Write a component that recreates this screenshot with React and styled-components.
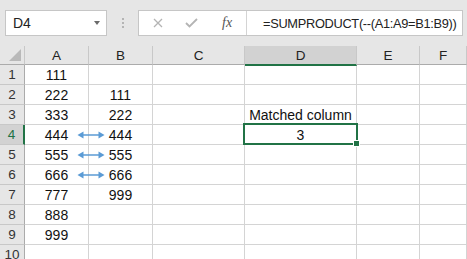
import React from 'react'
import styled, { createGlobalStyle } from 'styled-components'

const GlobalStyle = createGlobalStyle`
  html, body { margin: 0; padding: 0; background: #fff; }
  body { font-family: "Liberation Sans", Arial, sans-serif; }
`

const colA = [111, 222, 333, 444, 555, 666, 777, 888, 999]
const colB = ['', 111, 222, 444, 555, 666, 999, '', '']
const columns = ['A', 'B', 'C', 'D', 'E', 'F']
const arrowRows = [4, 5, 6]

const Page = styled.div`
  width: 467px;
  height: 259px;
  overflow: hidden;
  background: #fff;
`

const Toolbar = styled.div`
  height: 46px;
  box-sizing: border-box;
  padding: 10px 4px 0 5px;
  background: #e6e6e6;
  display: flex;
  align-items: flex-start;
`

const NameBox = styled.div`
  flex-shrink: 0;
  width: 102px;
  height: 26px;
  box-sizing: border-box;
  background: #fff;
  border: 1px solid #c6c6c6;
  display: flex;
  align-items: center;
  justify-content: space-between;
  padding: 0 6px 0 7px;
  font-size: 14px;
  color: #222;
`

const Caret = styled.span`
  width: 0;
  height: 0;
  border-left: 3.5px solid transparent;
  border-right: 3.5px solid transparent;
  border-top: 4px solid #6a6a6a;
`

const Grip = styled.div`
  flex-shrink: 0;
  width: 31px;
  height: 26px;
  display: flex;
  flex-direction: column;
  align-items: center;
  justify-content: center;
  gap: 2px;
  span {
    width: 2px;
    height: 2px;
    background: #b4b4b4;
  }
`

const FormulaBox = styled.div`
  flex: 1;
  min-width: 0;
  height: 26px;
  box-sizing: border-box;
  background: #fff;
  border: 1px solid #c6c6c6;
  display: flex;
  align-items: stretch;
  overflow: hidden;
`

const FxArea = styled.div`
  flex-shrink: 0;
  width: 108px;
  box-sizing: border-box;
  border-right: 1px solid #d4d4d4;
  display: flex;
  align-items: center;
  padding-left: 14px;
  gap: 22px;
`

const FxLabel = styled.span`
  font-family: "Liberation Serif", "Times New Roman", serif;
  font-style: italic;
  font-size: 14px;
  color: #555;
  margin-left: 2px;
`

const FormulaText = styled.div`
  display: flex;
  align-items: center;
  padding-left: 16px;
  font-size: 12.8px;
  letter-spacing: -0.3px;
  color: #222;
  white-space: nowrap;
`

const Grid = styled.div`
  display: grid;
  grid-template-columns: 25px 64px 64px 92px 112px 63px 1fr;
  grid-template-rows: 19px;
  grid-auto-rows: 20px;
`

const Corner = styled.div`
  background: #e6e6e6;
  border-right: 1px solid #c8c8c8;
  border-bottom: 1px solid #ababab;
  box-sizing: border-box;
  position: relative;
  &::after {
    content: '';
    position: absolute;
    right: 3px;
    bottom: 3px;
    border-left: 12px solid transparent;
    border-bottom: 12px solid #b9b9b9;
  }
`

const ColHead = styled.div`
  background: ${p => (p.$active ? '#d2d2d2' : '#e6e6e6')};
  border-right: 1px solid #c8c8c8;
  border-bottom: ${p => (p.$active ? '2px solid #217346' : '1px solid #ababab')};
  box-sizing: border-box;
  display: flex;
  align-items: center;
  justify-content: center;
  font-size: 13.5px;
  color: #222;
  margin-bottom: ${p => (p.$active ? '-1px' : '0')};
  position: relative;
  z-index: ${p => (p.$active ? 1 : 0)};
`

const RowHead = styled.div`
  background: ${p => (p.$active ? '#d2d2d2' : '#e6e6e6')};
  border-right: ${p => (p.$active ? '2px solid #217346' : '1px solid #ababab')};
  border-bottom: 1px solid #c8c8c8;
  box-sizing: border-box;
  display: flex;
  align-items: center;
  justify-content: center;
  font-size: 13.5px;
  color: ${p => (p.$active ? '#217346' : '#333')};
`

const Cell = styled.div`
  border-right: 1px solid #d4d4d4;
  border-bottom: 1px solid #d4d4d4;
  box-sizing: border-box;
  display: flex;
  align-items: center;
  justify-content: center;
  font-size: 14px;
  color: #111;
  position: relative;
  white-space: nowrap;
  overflow: visible;
`

const Selection = styled.div`
  position: absolute;
  left: -2px;
  top: -2px;
  right: -2px;
  bottom: -1px;
  border: 2px solid #217346;
  pointer-events: none;
  z-index: 3;
  &::after {
    content: '';
    position: absolute;
    right: -4px;
    bottom: -4px;
    width: 5px;
    height: 5px;
    background: #217346;
    border: 1px solid #fff;
  }
`

const Arrow = styled.svg`
  position: absolute;
  left: 52px;
  top: 5px;
  z-index: 2;
`

const DoubleArrow = () => (
  <Arrow width="28" height="10" viewBox="0 0 28 10">
    <line x1="3" y1="5" x2="25" y2="5" stroke="#5b9bd5" strokeWidth="1.5" />
    <path d="M0.5 5 L6.5 1.5 L6.5 8.5 Z" fill="#5b9bd5" />
    <path d="M27.5 5 L21.5 1.5 L21.5 8.5 Z" fill="#5b9bd5" />
  </Arrow>
)

const Cross = () => (
  <svg width="10" height="10" viewBox="0 0 10 10">
    <path d="M1 1 L9 9 M9 1 L1 9" stroke="#b4b4b4" strokeWidth="1.3" />
  </svg>
)

const Check = () => (
  <svg width="13" height="10" viewBox="0 0 13 10">
    <path d="M1 5 L4.5 8.5 L12 1" stroke="#b4b4b4" strokeWidth="1.8" fill="none" />
  </svg>
)

const App = () => {
  const rows = []
  for (let r = 1; r <= 10; r++) {
    const active = r === 4
    rows.push(
      <React.Fragment key={r}>
        <RowHead $active={active}>{r}</RowHead>
        <Cell>
          {colA[r - 1]}
          {arrowRows.includes(r) && <DoubleArrow />}
        </Cell>
        <Cell>{colB[r - 1]}</Cell>
        <Cell />
        <Cell>
          {r === 3 && 'Matched column'}
          {r === 4 && '3'}
          {r === 4 && <Selection />}
        </Cell>
        <Cell />
        <Cell />
      </React.Fragment>
    )
  }

  return (
    <Page>
      <GlobalStyle />
      <Toolbar>
        <NameBox>
          D4
          <Caret />
        </NameBox>
        <Grip>
          <span />
          <span />
          <span />
        </Grip>
        <FormulaBox>
          <FxArea>
            <Cross />
            <Check />
            <FxLabel>fx</FxLabel>
          </FxArea>
          <FormulaText>=SUMPRODUCT(--(A1:A9=B1:B9))</FormulaText>
        </FormulaBox>
      </Toolbar>
      <Grid>
        <Corner />
        {columns.map(c => (
          <ColHead key={c} $active={c === 'D'}>{c}</ColHead>
        ))}
        {rows}
      </Grid>
    </Page>
  )
}

export default App
